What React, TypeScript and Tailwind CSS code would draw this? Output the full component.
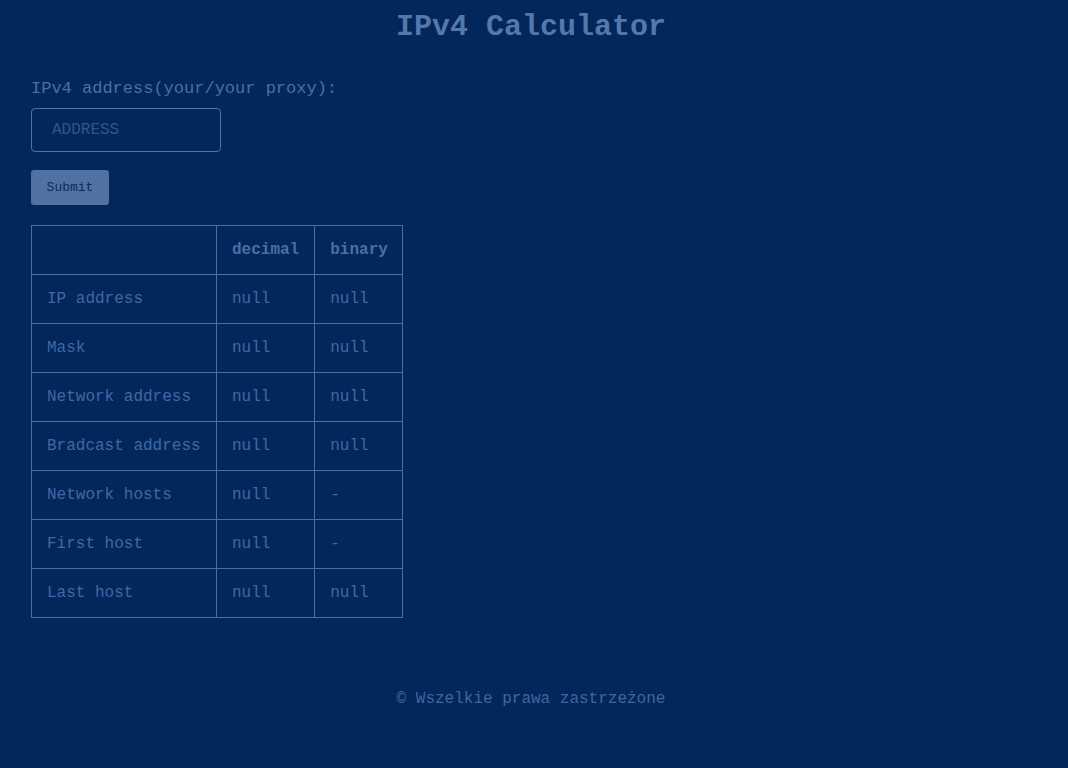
import React from 'react';

const ROWS: [string, string, string][] = [
  ['IP address', 'null', 'null'],
  ['Mask', 'null', 'null'],
  ['Network address', 'null', 'null'],
  ['Bradcast address', 'null', 'null'],
  ['Network hosts', 'null', '-'],
  ['First host', 'null', '-'],
  ['Last host', 'null', 'null'],
];

export default function App() {
  return (
    <div
      className="min-h-[768px] w-full bg-[#03275a] text-[#3f69a6] flex flex-col"
      style={{ fontFamily: '"Liberation Mono", "Courier New", monospace' }}
    >
      <h1 className="pt-[9px] pr-[6px] text-center text-[30px] leading-[36px] font-bold text-[#5478ab]">
        IPv4 Calculator
      </h1>

      <main className="px-[31px] pt-[32px] flex flex-col items-start">
        <label className="pt-[1px] text-[17px] leading-[22px] text-[#4a6fa5]">
          IPv4 address(your/your proxy):
        </label>
        <input
          placeholder="ADDRESS"
          className="mt-[8px] w-[190px] h-[44px] rounded-[4px] border border-[#4f73a8] bg-transparent px-[20px] text-[16px] placeholder:text-[#2f558e] outline-none"
        />
        <button className="mt-[18px] w-[78px] h-[35px] rounded-[3px] bg-[#5071a1] text-[13px] text-[#0d2b5c]">
          Submit
        </button>

        <table className="mt-[20px] border-collapse text-[16px]">
          <thead>
            <tr className="h-[49px]">
              <th className="w-[185px] border border-[#4a6fa5]"></th>
              <th className="w-[98px] border border-[#4a6fa5] px-[15px] text-left font-bold text-[#4a6fa5]">decimal</th>
              <th className="w-[88px] border border-[#4a6fa5] pl-[15px] pr-[14px] text-left font-bold text-[#4a6fa5]">binary</th>
            </tr>
          </thead>
          <tbody>
            {ROWS.map(([name, dec, bin]) => (
              <tr key={name} className="h-[49px]">
                <td className="border border-[#4a6fa5] px-[15px]">{name}</td>
                <td className="border border-[#4a6fa5] px-[15px]">{dec}</td>
                <td className="border border-[#4a6fa5] pl-[15px] pr-[14px]">{bin}</td>
              </tr>
            ))}
          </tbody>
        </table>
      </main>

      <footer className="mt-[71px] pr-[6px] text-center text-[16px] leading-[20px] text-[#4066a0]">
        © Wszelkie prawa zastrzeżone
      </footer>
    </div>
  );
}
